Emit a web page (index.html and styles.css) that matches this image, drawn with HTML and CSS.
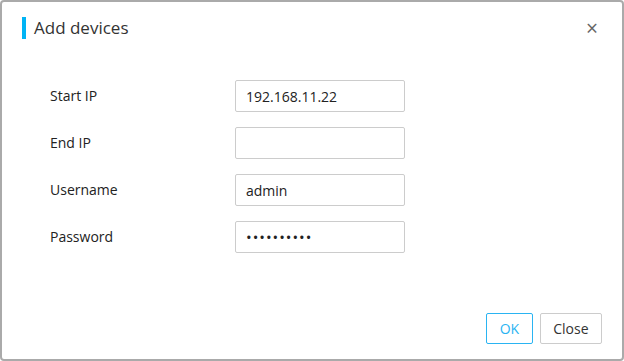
FILE: index.html
```html
<!DOCTYPE html>
<html lang="en">
<head>
    <meta charset="UTF-8">
    <title>Add devices</title>
    <link rel="stylesheet" href="styles.css">
</head>
<body>
    <div class="dialog">
        <div class="header">
            <h2 class="title">Add devices</h2>
            <span class="close-x">&#215;</span>
        </div>

        <form class="form">
            <label for="startIp">Start IP</label>
            <input id="startIp" type="text" value="192.168.11.22">
            <label for="endIp">End IP</label>
            <input id="endIp" type="text" value="">
            <label for="username">Username</label>
            <input id="username" type="text" value="admin">
            <label for="password">Password</label>
            <input id="password" class="pwd" type="password" value="1234567890">
        </form>

        <div class="footer">
            <button class="btn btn-primary">OK</button>
            <button class="btn">Close</button>
        </div>
    </div>
</body>
</html>
```

FILE: styles.css
```css
body { margin: 0; font-family: "Open Sans", "Noto Sans", sans-serif; color: #222; }
.dialog { width: 624px; height: 361px; box-sizing: border-box; border: 2px solid #aaa; border-radius: 4px; background: #fff; display: flex; flex-direction: column; }
.header { display: flex; align-items: center; justify-content: space-between; padding: 15px 24px 0 20px; }
.title { margin: 0; font-size: 17px; font-weight: normal; line-height: 22px; border-left: 4px solid #00b4f5; padding-left: 8px; color: #333; }
.close-x { font-size: 21px; color: #666; line-height: 22px; }
.form { display: grid; grid-template-columns: 185px 170px; row-gap: 15px; align-items: center; margin-top: 41px; padding-left: 48px; }
.form label { font-size: 14px; color: #222; line-height: 20px; margin-top: -1px; }
.form input { height: 32px; box-sizing: border-box; border: 1px solid #ccc; border-radius: 2px; padding: 0 10px; font-family: inherit; font-size: 14px; color: #222; outline: none; }
.form .pwd { letter-spacing: 1px; font-size: 15px; }
.footer { margin-top: auto; display: flex; justify-content: flex-end; gap: 7px; padding: 0 20px 15px 0; }
.btn { height: 31px; padding: 0 12.5px; font-family: inherit; font-size: 14px; background: #fff; color: #333; border: 1px solid #ccc; border-radius: 2px; cursor: pointer; }
.btn-primary { color: #2ab4f2; border-color: #2ab4f2; min-width: 46px; }
```
